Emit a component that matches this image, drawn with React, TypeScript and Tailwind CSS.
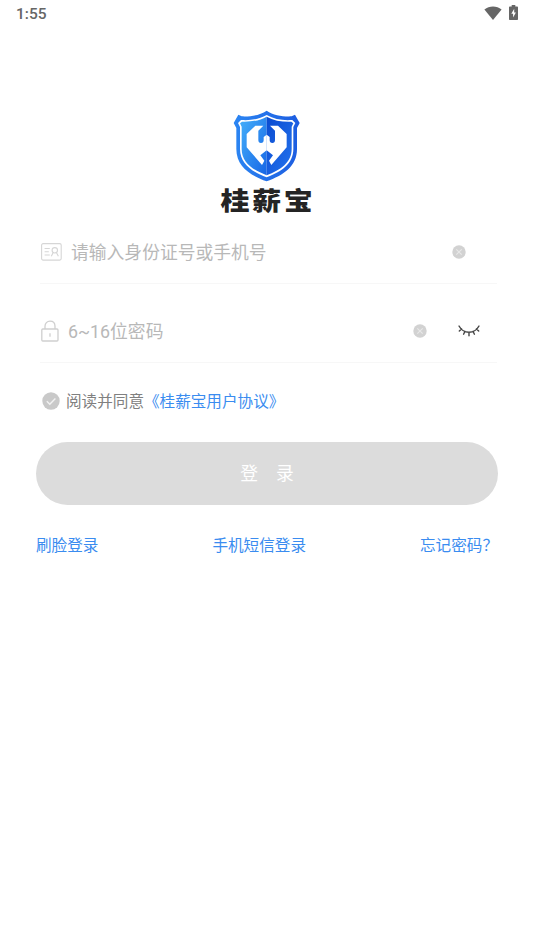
import type { ReactNode } from 'react';

function StatusBar() {
  return (
    <div className="flex h-7 items-center justify-between pl-4 pr-4 text-[#666]">
      <span className="font-[Roboto] text-[15.5px] font-medium leading-7">1:55</span>
      <div className="flex items-center gap-[7px] pb-[3px]">
        <svg className="h-[14px] w-[18px]" viewBox="0 0 18 14" fill="currentColor">
          <path d="M0.4 3.6C5.3-.5 12.7-.5 17.6 3.6L9 14Z" />
        </svg>
        <svg className="h-[15px] w-[9px]" viewBox="0 0 9 15">
          <path d="M2.7 0h3.6v1.5H8c.6 0 1 .4 1 1V14c0 .6-.4 1-1 1H1c-.6 0-1-.4-1-1V2.5c0-.6.4-1 1-1h1.7Z" fill="currentColor" />
          <path d="M5.2 3.8 2.3 8.7h1.8v3.7l2.8-5H5.2Z" fill="#fff" />
        </svg>
      </div>
    </div>
  );
}

function Logo() {
  return (
    <div className="flex flex-col items-center">
      <svg className="mr-0.5 h-[72px] w-[67px]" viewBox="54 15 201 216">
        <defs>
          <linearGradient id="rim" x1="0" y1="0" x2="1" y2="0">
            <stop offset="0" stopColor="#2b86f3" />
            <stop offset="1" stopColor="#1c5ce0" />
          </linearGradient>
          <linearGradient id="left" x1="0" y1="0" x2="1" y2="1">
            <stop offset="0" stopColor="#45b0fa" />
            <stop offset="1" stopColor="#1666e6" />
          </linearGradient>
          <linearGradient id="right" x1="0" y1="0" x2="1" y2="1">
            <stop offset="0" stopColor="#0b4bd0" />
            <stop offset="1" stopColor="#2474ef" />
          </linearGradient>
        </defs>
        <path d="M155 17C134 31 108 35 80 34L70 29 56 54 64 69V132C64 184 105 211 155 229C205 211 246 184 246 132V69L254 54 240 29 230 34C202 35 176 31 155 17Z" fill="url(#rim)" />
        <path d="M155 30C132 43 107 47 78 45L69 54 75 66V132C75 176 110 200 155 217C200 200 235 176 235 132V66L241 54 232 45C203 47 178 43 155 30Z" fill="#fff" />
        <path d="M155 35C134 47 108 51 81 50L75 55 80 65V132C80 172 113 195 155 211Z" fill="url(#left)" />
        <path d="M155 35C176 47 202 51 229 50L235 55 230 65V132C230 172 197 195 155 211Z" fill="url(#right)" />
        {/* two hooked hands forming a heart */}
        <path d="M121 62H145L130 77V105Q130 114 138 114Q146 114 146 105V96L155 89V136L136 151 148 167 141 180 95 127V87Z" fill="#fff" />
        <path d="M189 62H165L180 77V105Q180 114 172 114Q164 114 164 105V96L155 89V136L174 151 162 167 169 180 215 127V87Z" fill="#fff" />
      </svg>
      <div className="mt-0.5 h-[34px] origin-top scale-y-[0.88] pl-[2px] font-['Noto_Sans_CJK_SC'] text-[29px] font-black leading-[34px] tracking-[2.6px] text-[#242424]">
        桂薪宝
      </div>
    </div>
  );
}

function ClearIcon() {
  return (
    <svg className="h-[14px] w-[14px]" viewBox="0 0 14 14">
      <circle cx="7" cy="7" r="6.7" fill="#d2d2d2" />
      <path d="m4.3 4.3 5.4 5.4m0-5.4L4.3 9.7" stroke="#e8e8e8" strokeWidth="1.1" />
    </svg>
  );
}

function Field({ icon, placeholder, children }: { icon: ReactNode; placeholder: string; children: ReactNode }) {
  return (
    <div className="flex h-[63px] items-center border-b border-[#f7f7f7] text-[17.8px] text-[#b8b8b8]">
      {icon}
      <span className="flex-1 whitespace-nowrap pt-[3px]">{placeholder}</span>
      {children}
    </div>
  );
}

export default function App() {
  return (
    <div className="flex h-[950px] w-[534px] flex-col overflow-hidden bg-white font-[Roboto,'Noto_Sans_CJK_SC',sans-serif]">
      <StatusBar />
      <div className="mt-[82px]">
        <Logo />
      </div>

      <div className="ml-10 mr-[37px] mt-[3px]">
        <Field
          placeholder="请输入身份证号或手机号"
          icon={
            <svg className="ml-px mr-[9px] h-[18px] w-[21px]" viewBox="0 0 21 18" fill="none" stroke="#d6d6d6" strokeWidth="1.1">
              <rect x=".6" y=".6" width="19.6" height="16.5" rx="1.5" />
              <path d="M3.6 5.5h5.2M3.6 8.7h4.2M3.6 12h5.2M10.3 13.3 12.2 9.6M17.4 13.3 15.4 9.6" />
              <circle cx="13.8" cy="7.3" r="2.7" />
            </svg>
          }
        >
          <span className="mr-[31px]"><ClearIcon /></span>
        </Field>
        <div className="mt-4">
          <Field
            placeholder="6~16位密码"
            icon={
              <svg className="ml-px mr-[9px] h-[22px] w-[18px]" viewBox="0 0 18 22" fill="none" stroke="#cfcfcf" strokeWidth="1.3">
                <rect x=".8" y="9" width="16.2" height="12" rx="1" />
                <path d="M4 9V6.3C4 3.2 6.1 1.2 9 1.2s5 2 5 5.1V9M9 13.3v3.5" />
              </svg>
            }
          >
            <span className="mr-[31px]"><ClearIcon /></span>
            <svg className="mr-[17px] h-[14px] w-[22px]" viewBox="0 0 22 14" fill="none" stroke="#444" strokeWidth="1.4" strokeLinecap="round">
              <path d="M1 2c2.3 4.1 5.8 6.2 10 6.2S18.7 6.1 21 2M3.6 4.9 1.3 7M7 7.3 5.6 10.2M11 8.3v3.5M15 7.3l1.4 2.9M18.4 4.9 20.7 7" />
            </svg>
          </Field>
        </div>
      </div>

      <div className="ml-[42px] mt-[26px] flex h-6 items-center text-[15.6px] text-[#808080]">
        <svg className="mr-1.5 h-[18px] w-[18px]" viewBox="0 0 18 18">
          <circle cx="9" cy="9" r="8.7" fill="#c9c9c9" />
          <path d="m4.8 9.2 3 3 5.6-5.8" fill="none" stroke="#f2f2f2" strokeWidth="1.4" />
        </svg>
        <span className="pt-[3px]">阅读并同意</span>
        <span className="pt-[3px] text-[#3a8cf0]">《桂薪宝用户协议》</span>
      </div>

      <button className="ml-9 mt-[29px] flex h-[63px] w-[462px] shrink-0 items-center justify-center gap-[18px] rounded-full bg-[#dcdcdc] pt-0.5 text-[17.8px] text-white">
        <span>登</span>
        <span>录</span>
      </button>

      <div className="ml-9 mr-9 mt-[29px] flex justify-between text-[15.6px] leading-6 text-[#3a8cf0]">
        <span>刷脸登录</span>
        <span>手机短信登录</span>
        <span>忘记密码？</span>
      </div>
    </div>
  );
}
